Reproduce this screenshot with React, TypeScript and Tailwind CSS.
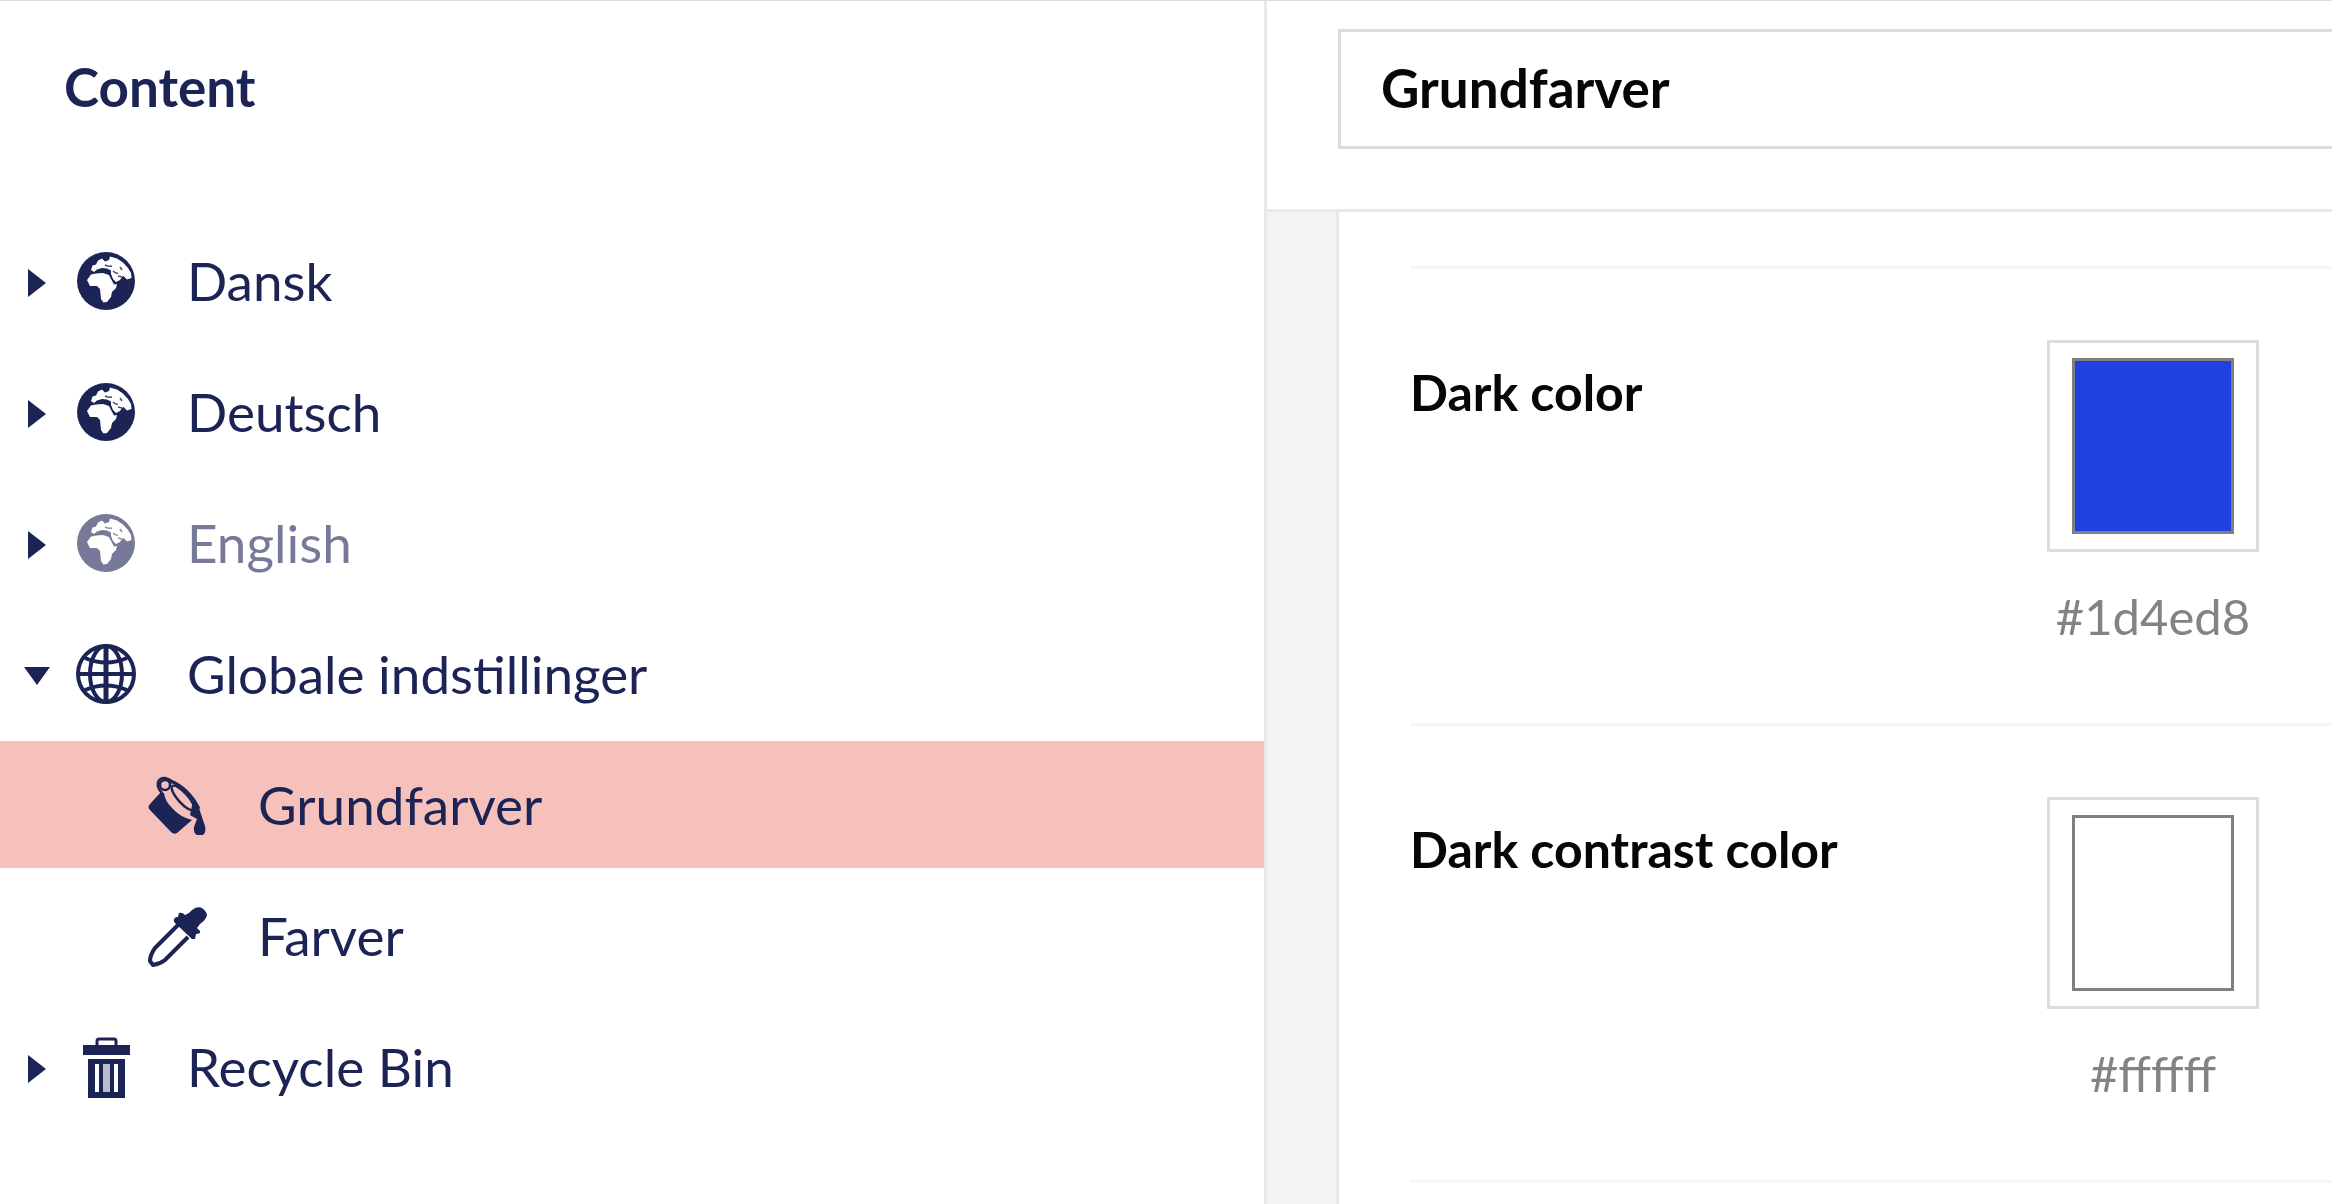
import { useState } from "react";
import clsx from "clsx";

const EarthIcon = () => (
  <svg viewBox="0 0 60 60" className="size-[60px] shrink-0" aria-hidden="true">
    <circle cx="30" cy="30" r="29" fill="currentColor" />
    <path
      fill="#fff"
      d="M11 29 15 23.500 20 22.500 27 22 33 24 35 28 38 33.500 41 33 40 37 36 41 35 46 31 51 27.500 51.500 25 48 24 38 21 35 14 35z"
    />
    <path
      fill="#fff"
      d="M15 19 16.500 14.500 20 13.500 22 9.500 26 7.500 29 10.500 33 9 34 5.500 41 7.500 47 11.500 52 17 55 22 55.500 27 51 28.500 47.500 25 46 26 44 29 40 31 37 28 35 23 35 19.500 31 17.500 26 17 21 18.500 18 21z"
    />
    <path
      d="M37 20q3 3 5 2M44 16l2 3M29 14q4 2 7 1M42 25l4 1"
      fill="none"
      stroke="currentColor"
      strokeWidth="1.500"
      opacity="0.8"
    />
  </svg>
);

const GlobeIcon = () => (
  <svg
    viewBox="0 0 60 60"
    className="size-[60px] shrink-0"
    fill="none"
    stroke="currentColor"
    strokeWidth="4"
    aria-hidden="true"
  >
    <circle cx="30" cy="30" r="28" />
    <ellipse cx="30" cy="30" rx="16" ry="28" />
    <path d="M2 30h56M9 14q21 9 42 0M9 46q21-9 42 0" />
    <path d="M30 2v56" strokeWidth="5" />
  </svg>
);

const BucketIcon = () => (
  <svg viewBox="0 0 60 60" className="size-[60px] shrink-0" aria-hidden="true">
    <path fill="currentColor" d="M14 17 3 29Q0 32 3 35L24 57Q27 60 30 58L45 45Q33 42 25 33 18 26 17 18z" />
    <g fill="none" stroke="currentColor" strokeWidth="2.500">
      <path d="M15 18C8 11 10 3 18 3q4 1 8 4" />
      <circle cx="18" cy="10" r="5" />
      <path d="M23 6C35 10 46 21 52 34" strokeWidth="3" />
      <ellipse cx="36" cy="23" rx="16" ry="5" transform="rotate(48 36 23)" />
    </g>
    <path fill="currentColor" d="M46 26Q52 31 54 39L58 51Q60 60 53 61 46 60 47 52L50 44 43 40z" />
  </svg>
);

const DropperIcon = () => (
  <svg viewBox="0 0 60 62" className="h-[62px] w-[60px] shrink-0" aria-hidden="true">
    <path
      fill="currentColor"
      d="M42 8Q48 1 54 2.500 59 5 60 10 59 15 53 19L50 23 53 26Q54 29 49 29L48 34 45 34 27 17Q26 12 31 12L32 8Q35 7 38 10z"
    />
    <path
      fill="none"
      stroke="currentColor"
      strokeWidth="4"
      strokeLinejoin="round"
      d="M31 20 8 43Q3 50 3 56L6 60Q13 59 18 55L41 32"
    />
  </svg>
);

const TrashIcon = () => (
  <svg viewBox="0 0 60 62" className="h-[62px] w-[60px] shrink-0" aria-hidden="true">
    <path fill="none" stroke="currentColor" strokeWidth="3" d="M21 10V5q0-2 2-2h15q2 0 2 2v5" />
    <path fill="currentColor" d="M7 9h47v10H7zM12 23h37v39H12z" />
    <path fill="#fff" d="M19 28h4v28h-4zM38 28h4v28h-4z" />
    <path fill="#b9bccd" d="M27 28h7v28h-7z" />
  </svg>
);

const tree = [
  { label: "Dansk", icon: EarthIcon, hasChildren: true },
  { label: "Deutsch", icon: EarthIcon, hasChildren: true },
  { label: "English", icon: EarthIcon, hasChildren: true, unpublished: true },
  {
    label: "Globale indstillinger",
    icon: GlobeIcon,
    hasChildren: true,
    children: [
      { label: "Grundfarver", icon: BucketIcon },
      { label: "Farver", icon: DropperIcon },
    ],
  },
  { label: "Recycle Bin", icon: TrashIcon, hasChildren: true },
];

const TreeRow = ({ item, child = false, active = false, open = false, onToggle = () => {} }: any) => {
  const Icon = item.icon;

  return (
    <div className={clsx("flex h-[127px] items-center pr-6", child ? "pl-[147px]" : "pl-6", active && "bg-[#f6c1bb]")}>
      {item.hasChildren && (
        <button
          type="button"
          onClick={onToggle}
          aria-expanded={open}
          aria-label={`Toggle ${item.label}`}
          className="mr-[26px] shrink-0 pt-1"
        >
          <svg viewBox="0 0 26 28" className="h-7 w-[26px]" fill="currentColor">
            <path d={open ? "M0 5h26L13 23z" : "M4 0v28l18-14z"} />
          </svg>
        </button>
      )}
      <a
        href="#"
        aria-current={active ? "page" : undefined}
        className={clsx("flex min-w-0 items-center gap-[51px]", item.unpublished && "opacity-60")}
      >
        <Icon />
        <span className="truncate leading-[72px]">{item.label}</span>
      </a>
    </div>
  );
};

type ColorFieldProps = { id: string; label: string; code: string; swatch: string };

const ColorField = ({ id, label, code, swatch }: ColorFieldProps) => {
  const [picked, setPicked] = useState("");

  return (
    <div className="flex border-t-[3px] border-[#f7f6f7] pt-[71px] pb-[79px]">
      <label htmlFor={id} className="w-[637px] shrink-0 pt-5 text-[50px] leading-16 font-bold text-[#060606]">
        {label}
      </label>
      <div className="flex flex-col items-center gap-9">
        <input
          id={id}
          type="color"
          value={picked || swatch}
          onChange={(e) => setPicked(e.target.value)}
          className="size-[212px] appearance-none border-[3px] border-[#dcdcdc] bg-white px-[22px] py-[15px] [&::-webkit-color-swatch]:rounded-none [&::-webkit-color-swatch]:border-[3px] [&::-webkit-color-swatch]:border-[#808080] [&::-webkit-color-swatch-wrapper]:p-0"
        />
        <span className="text-[49px] leading-14 text-[#838383]">{picked || code}</span>
      </div>
    </div>
  );
};

const App = () => {
  const [opened, setOpened] = useState<string[]>(["Globale indstillinger"]);

  const toggle = (label: string) =>
    setOpened((prev) => (prev.includes(label) ? prev.filter((l) => l !== label) : [...prev, label]));

  return (
    <div className="grid min-h-screen grid-cols-[1267fr_1065fr] border-t border-[#dcdcdc] bg-white font-[Lato,sans-serif]">
      {/* Content tree */}
      <aside className="min-w-0 border-r-[3px] border-[#e9e9eb] text-[53px] text-[#1c2355]">
        <h1 className="px-16 pt-[50px] pb-[94px] leading-[72px] font-bold">Content</h1>
        <nav className="flex flex-col gap-1" aria-label="Content">
          {tree.map((item) => {
            const open = opened.includes(item.label);
            return (
              <div key={item.label} className="flex flex-col gap-1">
                <TreeRow item={item} open={open} onToggle={() => toggle(item.label)} />
                {open &&
                  item.children?.map((c) => <TreeRow key={c.label} item={c} child active={c.label === "Grundfarver"} />)}
              </div>
            );
          })}
        </nav>
      </aside>

      {/* Editor */}
      <main className="flex min-w-0 flex-col overflow-hidden">
        <header className="border-b-[3px] border-[#e9e9eb] pt-7 pb-[60px] pl-[71px]">
          <input
            type="text"
            aria-label="Name"
            defaultValue="Grundfarver"
            className="block h-[120px] w-full border-[3px] border-r-0 border-[#dcdcdc] px-10 pb-1 text-[53px] font-bold text-[#060606] outline-none"
          />
        </header>
        <div className="flex-1 bg-[#f4f2f3] pl-[69px]">
          <div className="h-full border-l-[3px] border-[#e9e9eb] bg-white pt-[54px] pl-[71px]">
            <ColorField id="dark" label="Dark color" code="#1d4ed8" swatch="#2040df" />
            <ColorField id="dark-contrast" label="Dark contrast color" code="#ffffff" swatch="#ffffff" />
            <div className="border-t-[3px] border-[#f7f6f7]" />
          </div>
        </div>
      </main>
    </div>
  );
};

export default App;
